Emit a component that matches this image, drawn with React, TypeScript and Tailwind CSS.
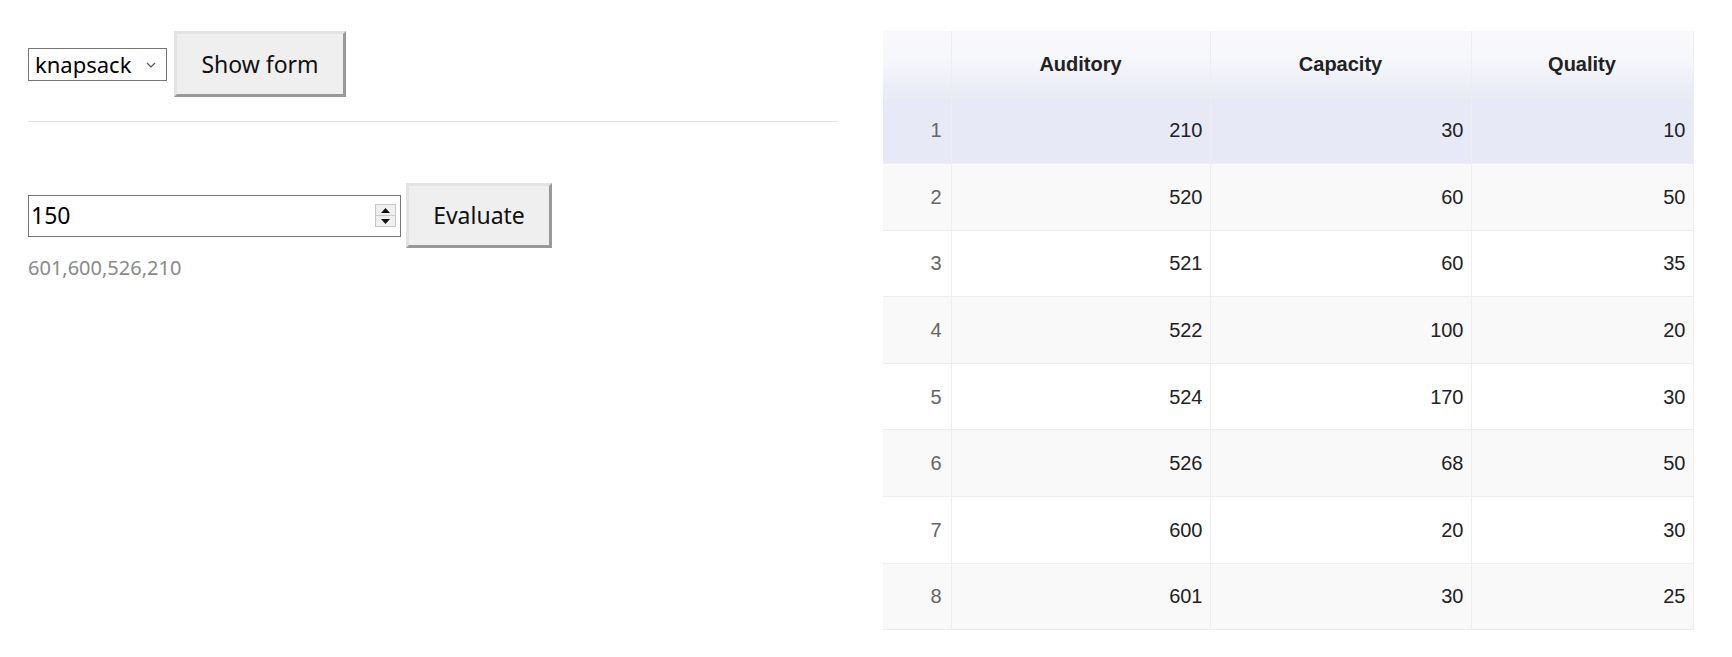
import React from 'react';

const rows = [
  { auditory: 210, capacity: 30, quality: 10 },
  { auditory: 520, capacity: 60, quality: 50 },
  { auditory: 521, capacity: 60, quality: 35 },
  { auditory: 522, capacity: 100, quality: 20 },
  { auditory: 524, capacity: 170, quality: 30 },
  { auditory: 526, capacity: 68, quality: 50 },
  { auditory: 600, capacity: 20, quality: 30 },
  { auditory: 601, capacity: 30, quality: 25 },
];

const btn =
  'bg-[#efefef] text-[23px] text-[#111] border-[3px] border-t-[#e3e3e3] border-l-[#e3e3e3] border-b-[#999] border-r-[#999]';

const App = () => {
  return (
    <div className="min-h-screen bg-white flex font-['Noto_Sans',sans-serif]">
      {/* Left panel */}
      <div className="w-[810px] ml-[28px] pt-[31px] shrink-0">
        <div className="flex items-center gap-[7px]">
          <div className="w-[139px] h-[33px] border border-[#767676] flex items-center justify-between pl-[6px] pr-[10px]">
            <span className="text-[22px] text-black leading-none">knapsack</span>
            <svg width="10" height="6" viewBox="0 0 10 6" className="mt-[2px]">
              <path d="M1 1 L5 5 L9 1" fill="none" stroke="#555" strokeWidth="1.2" />
            </svg>
          </div>
          <button className={`${btn} w-[172px] h-[66px]`}>Show form</button>
        </div>

        <div className="h-px bg-[#e5e5e5] mt-[24px]" />

        <div className="flex items-center gap-[5px] mt-[61px]">
          <div className="w-[373px] h-[42px] border border-[#767676] flex items-center pl-[2px] pr-[4px]">
            <span className="flex-1 text-[23px] text-black leading-none">150</span>
            <div className="w-[21px] h-[23px] border border-[#c8c8c8] bg-[#f0f0f0] flex flex-col">
              <div className="flex-1 flex items-center justify-center border-b border-[#c8c8c8]">
                <svg width="9" height="5" viewBox="0 0 9 5">
                  <path d="M0 5 L4.5 0 L9 5 Z" fill="#111" />
                </svg>
              </div>
              <div className="flex-1 flex items-center justify-center">
                <svg width="9" height="5" viewBox="0 0 9 5">
                  <path d="M0 0 L4.5 5 L9 0 Z" fill="#111" />
                </svg>
              </div>
            </div>
          </div>
          <button className={`${btn} w-[146px] h-[65px]`}>Evaluate</button>
        </div>
        <div className="mt-[5px] text-[20px] text-[#8a8a8a]">601,600,526,210</div>
      </div>

      {/* Table */}
      <div className="ml-[45px] pt-[31px] font-['Liberation_Sans',Arial,sans-serif]">
        <table className="border-collapse text-[20px] text-[#222]">
          <thead>
            <tr className="h-[66px] bg-[linear-gradient(to_bottom,#f9f9fc_0%,#f6f7fb_45%,#e8eaf5_100%)]">
              <th className="w-[68px] border-r border-[#ececf2]" />
              <th className="w-[259px] font-bold border-r border-[#ececf2]">Auditory</th>
              <th className="w-[261px] font-bold border-r border-[#ececf2]">Capacity</th>
              <th className="w-[222px] font-bold border-r border-[#eee]">Quality</th>
            </tr>
          </thead>
          <tbody>
            {rows.map((r, i) => (
              <tr
                key={i}
                className={`h-[66.6px] border-t border-[#eee] ${
                  i === 0 ? 'bg-[#e8e9f7]' : i % 2 === 1 ? 'bg-[#f9f9f9]' : 'bg-white'
                } ${i === rows.length - 1 ? 'border-b' : ''}`}
              >
                <td className="text-right pr-[9px] text-[#666] border-r border-[#eee]">{i + 1}</td>
                <td className="text-right pr-[7px] border-r border-[#eee]">{r.auditory}</td>
                <td className="text-right pr-[7px] border-r border-[#eee]">{r.capacity}</td>
                <td className="text-right pr-[7px] border-r border-[#eee]">{r.quality}</td>
              </tr>
            ))}
          </tbody>
        </table>
      </div>
    </div>
  );
};

export default App;
